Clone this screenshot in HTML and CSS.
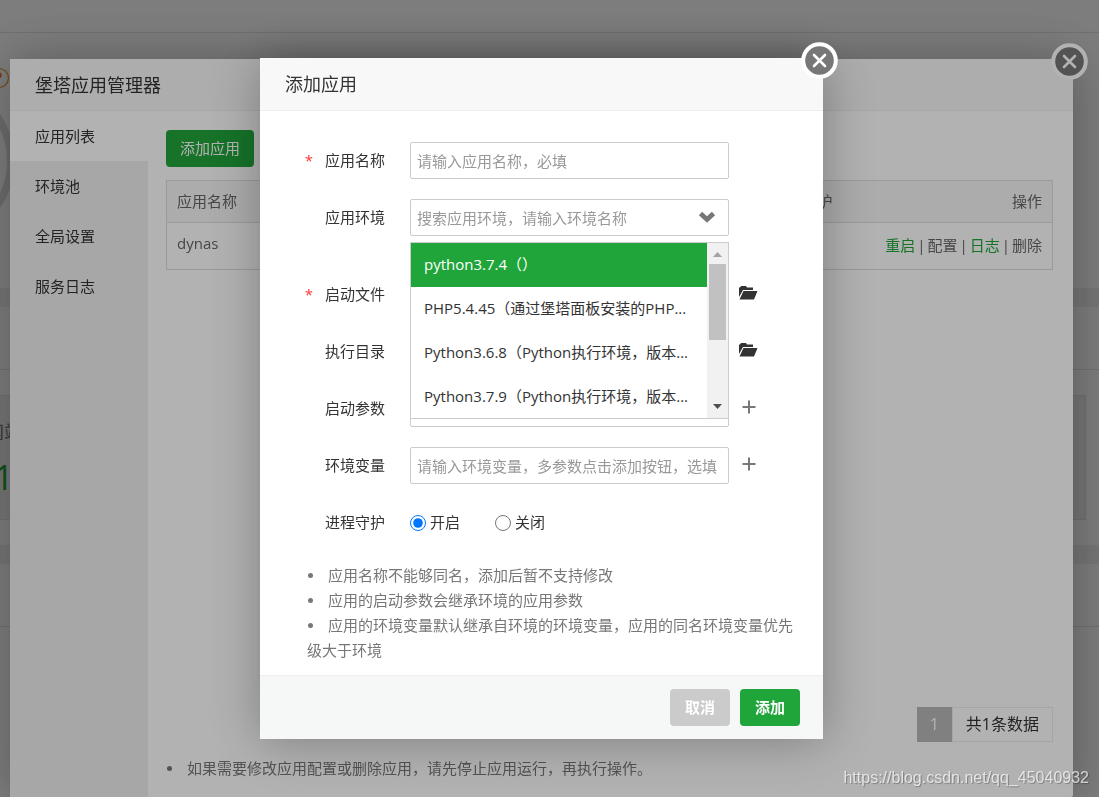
FILE: index.html
```html
<!DOCTYPE html>
<html lang="zh-CN">
<head>
<meta charset="utf-8">
<title>堡塔应用管理器</title>
<link rel="stylesheet" href="styles.css">
</head>
<body>
<div class="page">
  <div class="topbar"></div>
  <section class="status">
    <svg class="gauge" width="20" height="170" viewBox="0 0 20 170" aria-hidden="true">
      <circle cx="-1" cy="18" r="9.5" fill="none" stroke="#f39c3c" stroke-width="1.3"/>
      <path d="M-4 15.500a2.500 2.500 0 0 1 5 0c0 2-2.500 2-2.500 4" fill="none" stroke="#e8702a" stroke-width="1.500"/>
      <circle cx="-66" cy="101" r="77" fill="none" stroke="#dcdcdc" stroke-width="8"/>
    </svg>
  </section>
  <section class="panel">
    <div class="panel-head"></div>
    <div class="overview">
      <div class="overview-label">网站</div>
      <div class="overview-count">1</div>
    </div>
  </section>
  <section class="panel">
    <div class="panel-head"></div>
  </section>
</div>

<div class="backdrop">
  <div class="dialog manager">
    <header class="dialog-head">堡塔应用管理器</header>
    <button class="close" type="button" aria-label="关闭窗口">
      <svg width="37" height="37" viewBox="0 0 37 37"><circle cx="18.500" cy="18.500" r="16.300" fill="#777" stroke="#fff" stroke-width="4"/><path d="M13 13l11 11M24 13l-11 11" stroke="#fff" stroke-width="2.600" stroke-linecap="round"/></svg>
    </button>
    <div class="manager-body">
      <nav class="side">
        <a class="side-link active" href="#list">应用列表</a>
        <a class="side-link" href="#env">环境池</a>
        <a class="side-link" href="#settings">全局设置</a>
        <a class="side-link" href="#logs">服务日志</a>
      </nav>
      <main class="main">
        <button class="btn btn-add" type="button">添加应用</button>
        <table class="apps">
          <colgroup><col><col class="col-guard"><col class="col-links"></colgroup>
          <thead><tr><th>应用名称</th><th>进程守护</th><th class="right">操作</th></tr></thead>
          <tbody><tr><td class="name">dynas</td><td></td><td class="right"><div class="links"><a class="green" href="#restart">重启</a><span>|</span><a href="#config">配置</a><span>|</span><a class="green" href="#log">日志</a><span>|</span><a href="#delete">删除</a></div></td></tr></tbody>
        </table>
        <div class="pager"><span class="pager-current">1</span><span class="pager-total">共1条数据</span></div>
        <ul class="notes"><li>如果需要修改应用配置或删除应用，请先停止应用运行，再执行操作。</li></ul>
      </main>
    </div>
  </div>
</div>

<div class="backdrop">
  <form class="dialog add">
    <header class="dialog-head">添加应用</header>
    <button class="close" type="button" aria-label="关闭">
      <svg width="37" height="37" viewBox="0 0 37 37"><circle cx="18.500" cy="18.500" r="16.300" fill="#777" stroke="#fff" stroke-width="4"/><path d="M13 13l11 11M24 13l-11 11" stroke="#fff" stroke-width="2.600" stroke-linecap="round"/></svg>
    </button>
    <div class="fields">
      <div class="row">
        <label class="label" for="name"><span class="star">*</span>应用名称</label>
        <input class="input" id="name" type="text" placeholder="请输入应用名称，必填">
      </div>
      <div class="row row-env">
        <label class="label" for="env">应用环境</label>
        <div class="combo">
          <input class="input" id="env" type="text" placeholder="搜索应用环境，请输入环境名称">
          <svg class="chevron" width="18" height="12" viewBox="0 0 18 12" aria-hidden="true"><path d="M2.500 2.500L9 8.500l6.500-6" fill="none" stroke="#777" stroke-width="4.800"/></svg>
          <div class="menu">
            <ul class="options" role="listbox" aria-label="应用环境">
              <li class="option selected" role="option">python3.7.4（）</li>
              <li class="option" role="option">PHP5.4.45（通过堡塔面板安装的PHP...</li>
              <li class="option" role="option">Python3.6.8（Python执行环境，版本...</li>
              <li class="option" role="option">Python3.7.9（Python执行环境，版本...</li>
            </ul>
            <div class="scroll">
              <svg width="21" height="21" viewBox="0 0 21 21" aria-hidden="true"><path d="M6 14l4.500-5 4.500 5z" fill="#a3a3a3"/></svg>
              <div class="thumb"></div>
              <svg class="scroll-down" width="21" height="21" viewBox="0 0 21 21" aria-hidden="true"><path d="M6 7l4.500 5L15 7z" fill="#505050"/></svg>
            </div>
          </div>
        </div>
      </div>
      <div class="row">
        <label class="label" for="file"><span class="star">*</span>启动文件</label>
        <input class="input" id="file" type="text">
        <button class="icon" type="button" aria-label="选择文件"><svg width="20" height="16" viewBox="0 0 20 16"><path d="M0 12V2.500h1L2 1h5l1 1.500h6V5H4z" fill="#333"/><path d="M4.500 6H18.500L15 14.500H.5z" fill="#333"/></svg></button>
      </div>
      <div class="row">
        <label class="label" for="dir">执行目录</label>
        <input class="input" id="dir" type="text">
        <button class="icon" type="button" aria-label="选择目录"><svg width="20" height="16" viewBox="0 0 20 16"><path d="M0 12V2.500h1L2 1h5l1 1.500h6V5H4z" fill="#333"/><path d="M4.500 6H18.500L15 14.500H.5z" fill="#333"/></svg></button>
      </div>
      <div class="row">
        <label class="label" for="args">启动参数</label>
        <input class="input" id="args" type="text">
        <button class="icon" type="button" aria-label="添加启动参数"><svg width="20" height="16" viewBox="0 0 20 16"><path d="M10 1.500v13M3.500 8h13" stroke="#777" stroke-width="2"/></svg></button>
      </div>
      <div class="row">
        <label class="label" for="vars">环境变量</label>
        <input class="input" id="vars" type="text" placeholder="请输入环境变量，多参数点击添加按钮，选填">
        <button class="icon" type="button" aria-label="添加环境变量"><svg width="20" height="16" viewBox="0 0 20 16"><path d="M10 1.500v13M3.500 8h13" stroke="#777" stroke-width="2"/></svg></button>
      </div>
      <div class="row" role="radiogroup" aria-labelledby="guard">
        <span class="label" id="guard">进程守护</span>
        <div class="radios">
          <label class="radio"><input type="radio" name="guard" checked>开启</label>
          <label class="radio"><input type="radio" name="guard">关闭</label>
        </div>
      </div>
    </div>
    <ul class="notes add-notes">
      <li>应用名称不能够同名，添加后暂不支持修改</li>
      <li>应用的启动参数会继承环境的应用参数</li>
      <li>应用的环境变量默认继承自环境的环境变量，应用的同名环境变量优先级大于环境</li>
    </ul>
    <footer class="actions">
      <button class="btn btn-cancel" type="button">取消</button>
      <button class="btn" type="submit">添加</button>
    </footer>
  </form>
</div>
<div class="watermark">https://blog.csdn.net/qq_45040932</div>
</body>
</html>
```

FILE: styles.css
```css
* { box-sizing: border-box; }

body {
  margin: 0;
  height: 100vh;
  overflow: hidden;
  color: #333;
  font: 15px/25px "Open Sans", "Noto Sans CJK SC", sans-serif;
}

button, input { font: inherit; }
a { color: inherit; text-decoration: none; }
ul { list-style: none; margin: 0; padding: 0; }

/* Dashboard behind the dialogs */
.page {
  display: flex;
  flex-direction: column;
  gap: 19px;
  height: 100%;
  background: #f0f0f0;
}
.topbar {
  flex: none;
  height: 33px;
  margin-bottom: -19px;
  background: #fff;
  border-bottom: 1px solid #e4e4e4;
}
.status {
  flex: none;
  height: 255px;
  padding-top: 27px;
  background: #fff;
}
.gauge { display: block; }
.panel {
  flex: none;
  padding-bottom: 25px;
  background: #fff;
}
.panel:last-child { flex: 1; }
.panel-head {
  height: 63px;
  border-bottom: 1px solid #e4e4e4;
}
.overview {
  height: 125px;
  margin: 25px 13px 0 -15px;
  padding-top: 24px;
  background: #f0f0f0;
  border: 1px solid #e4e4e4;
  color: #777;
  font-size: 18px;
}
.overview-count {
  padding: 20px 0 0 8px;
  color: #20a53a;
  font-size: 34px;
}

/* Dialogs */
.backdrop {
  position: fixed;
  inset: 0;
  display: flex;
  justify-content: center;
  align-items: flex-start;
  padding: 58px 26px 0 10px;
  overflow: hidden;
  background: rgba(0, 0, 0, .3);
}
.dialog {
  position: relative;
  background: #fff;
  border-radius: 2px;
  box-shadow: 1px 1px 50px rgba(0, 0, 0, .3);
}
.dialog-head {
  height: 53px;
  padding-left: 25px;
  background: #f8f8f8;
  border-bottom: 1px solid #eee;
  font-size: 18px;
  line-height: 52px;
}
.close {
  position: absolute;
  top: -16px;
  right: -15px;
  padding: 0;
  border: 0;
  background: none;
}
.close svg { display: block; }
.btn {
  height: 37px;
  padding: 0 14px;
  border: 0;
  border-radius: 4px;
  background: #20a53a;
  color: #fff;
  font-weight: bold;
}

/* Application manager */
.manager {
  display: flex;
  flex-direction: column;
  flex: 1;
  align-self: stretch;
  margin-top: 1px;
}
.manager .dialog-head { height: 52px; }
.manager-body { display: flex; flex: 1; }
.side {
  width: 138px;
  background: #f0f0f0;
}
.side-link {
  display: block;
  padding-left: 25px;
  line-height: 50px;
}
.side-link.active { background: #fff; }
.main {
  display: flex;
  flex: 1;
  flex-direction: column;
  padding: 19px 20px 16px 18px;
}
.btn-add {
  align-self: flex-start;
  font-weight: normal;
}
.apps {
  width: 100%;
  margin-top: 13px;
  border: 1px solid #ddd;
  border-collapse: collapse;
  table-layout: fixed;
  color: #666;
}
.col-guard { width: 90px; }
.col-links { width: 200px; }
.apps th, .apps td {
  height: 42px;
  padding: 0 10px;
  text-align: left;
  font-weight: normal;
}
.apps th {
  background: #f6f6f6;
  border-bottom: 1px solid #ddd;
}
.apps td { height: 47px; padding-bottom: 2px; }
.apps .name { padding-bottom: 6px; }
.apps .right { text-align: right; }
.links {
  display: flex;
  justify-content: flex-end;
  gap: 2px;
}
.green { color: #20a53a; }
.pager {
  display: flex;
  align-self: flex-end;
  margin-top: auto;
  font-size: 16px;
  line-height: 35px;
}
.pager-current {
  width: 35px;
  background: #b8b8b8;
  color: #fff;
  text-align: center;
}
.pager-total {
  padding: 0 13px;
  border: 1px solid #ececec;
  line-height: 33px;
}
.notes { color: #777; }
.notes li::before {
  content: "";
  display: inline-block;
  width: 5px;
  height: 5px;
  margin: 0 15px 3px 1px;
  border-radius: 50%;
  background: #777;
}
.main .notes { margin-top: 14px; }

/* Add-application form */
.add { width: 563px; }
.fields {
  display: flex;
  flex-direction: column;
  gap: 20px;
  padding-top: 31px;
}
.row {
  display: flex;
  align-items: center;
  height: 37px;
}
.row-env { margin-bottom: 20px; }
.label {
  width: 125px;
  margin-right: 25px;
  text-align: right;
}
.star { margin-right: 12px; color: #f33; }
.input {
  width: 319px;
  height: 37px;
  padding: 0 6px;
  border: 1px solid #ccc;
  border-radius: 2px;
  background: #fff;
  color: #333;
}
.input::placeholder { color: #999; }
.icon {
  margin-left: 10px;
  padding: 0 0 4px;
  border: 0;
  background: none;
}
.icon svg { display: block; }
.combo { position: relative; }
.chevron {
  position: absolute;
  top: 12px;
  right: 13px;
}
.menu {
  position: absolute;
  z-index: 1;
  top: 43px;
  left: 0;
  right: 0;
  display: flex;
  border: 1px solid #ccc;
  background: #fff;
}
.options { flex: 1; }
.option {
  height: 44px;
  padding-left: 13px;
  line-height: 42px;
  white-space: nowrap;
}
.option:last-child { height: 43px; }
.selected { background: #20a53a; color: #fff; }
.scroll {
  display: flex;
  flex-direction: column;
  width: 21px;
  background: #f1f1f1;
}
.thumb {
  width: 17px;
  height: 76px;
  margin-left: 2px;
  background: #c1c1c1;
}
.scroll-down { margin-top: auto; }
.radios { display: flex; gap: 35px; }
.radio { display: flex; align-items: center; }
.radio input {
  width: 16px;
  height: 16px;
  margin: 0 4px 0 0;
  accent-color: #0075ff;
}
.add-notes { padding: 22px 24px 12px 47px; }
.actions {
  display: flex;
  justify-content: flex-end;
  gap: 10px;
  padding: 13px 23px;
  border-top: 1px solid #eee;
  background: #f6f8f8;
}
.actions .btn { width: 60px; }
.actions .btn-cancel { background: #cbcbcb; }

.watermark {
  position: fixed;
  right: 10px;
  bottom: 7px;
  color: rgba(255, 255, 255, .7);
  font: 16px/25px "Liberation Sans", Arial, sans-serif;
  text-shadow: 1px 1px 1px rgba(0, 0, 0, .3);
}
```
